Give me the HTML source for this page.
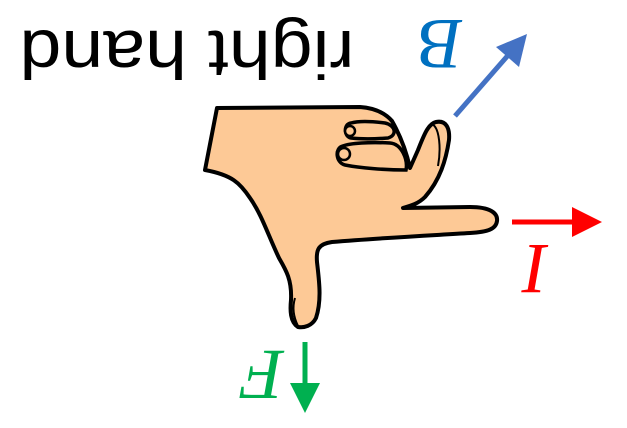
<!DOCTYPE html>
<html><head><style>html,body{margin:0;padding:0;background:#fff;}svg{display:block}</style></head>
<body>
<svg width="627" height="428" viewBox="0 0 627 428" xmlns="http://www.w3.org/2000/svg">
<g transform="rotate(180 187 48)">
<text x="187" y="65" font-family="Liberation Sans, sans-serif" font-size="68" text-anchor="middle" textLength="335" lengthAdjust="spacingAndGlyphs" fill="#000">right hand</text>
</g>
<g font-family="Liberation Serif, serif" font-style="italic" font-size="72" text-anchor="middle">
<text transform="rotate(180 441 44)" x="441" y="68" fill="#0070c0">B</text>
<text transform="rotate(180 536 269)" x="536" y="293" fill="#ff0000">I</text>
<text transform="rotate(180 262 375)" x="262" y="399" fill="#00b050">F</text>
</g>
<!-- arrows -->
<line x1="455" y1="116" x2="510" y2="53" stroke="#4472c4" stroke-width="5"/>
<polygon points="527,34 519,67 496,47" fill="#4472c4"/>
<line x1="512" y1="222" x2="576" y2="222" stroke="#ff0000" stroke-width="5"/>
<polygon points="602,222 572,207 572,237" fill="#ff0000"/>
<line x1="305" y1="342" x2="305" y2="386" stroke="#00b050" stroke-width="5"/>
<polygon points="305,413 290,383 320,383" fill="#00b050"/>
<!-- hand -->
<path d="M217,108 L360,107 C375,108 385,113 392,121 C400,135 406,150 410,168 L418,150 C424,135 428,124 436,122 C446,120 450,128 449,140 C446,160 440,180 425,197 C418,204 410,206 403,208 L470,207 C490,207 498,213 497,221 C496,229 488,232 470,233 C420,236 380,238 332,242 C318,244 316,250 317,262 C319,280 322,300 316,318 C312,326 304,328 298,327 C290,322 290,310 291,300 C292,280 286,270 279,258 C268,235 262,215 250,198 C240,183 232,175 205,170 Z" fill="#fdc996" stroke="#000" stroke-width="4" stroke-linejoin="round"/>
<path d="M432,124 C440,128 441,150 438,166" fill="none" stroke="#000" stroke-width="2"/>
<path d="M295,298 C292,308 294,318 298,326" fill="none" stroke="#000" stroke-width="2"/>
<!-- curled fingers -->
<path d="M351,123 C358,121 370,121 385,123 C395,125 398,135 388,138 C375,139 360,139 351,138 C344,137 343,124 351,123 Z" fill="#fdc996" stroke="#000" stroke-width="3.5"/>
<circle cx="350" cy="131" r="5" fill="#fdc996" stroke="#000" stroke-width="2.5"/>
<path d="M343,146 C350,143 370,142 390,143 C402,144 408,160 406,170 C385,170 360,168 345,165 C336,163 334,148 343,146 Z" fill="#fdc996" stroke="#000" stroke-width="3.5"/>
<circle cx="344" cy="154" r="6" fill="#fdc996" stroke="#000" stroke-width="2.5"/>
</svg>
</body></html>
